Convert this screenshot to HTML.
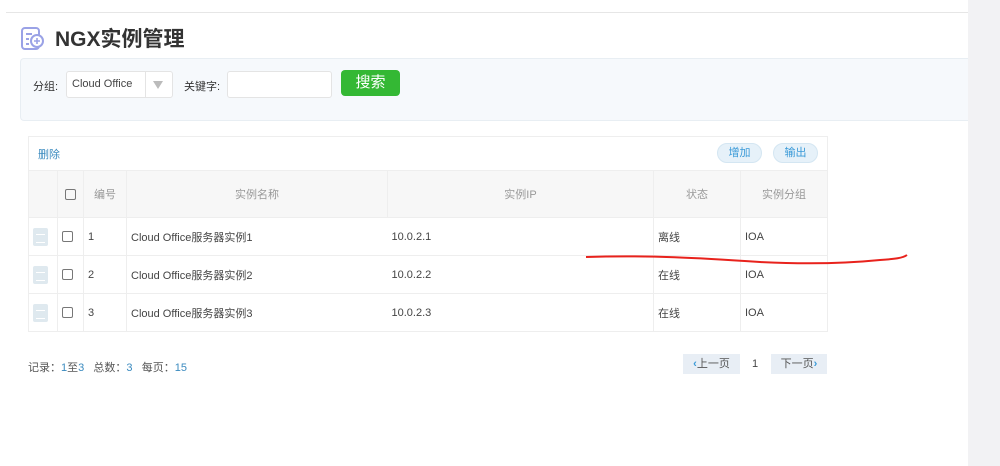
<!DOCTYPE html>
<html><head><meta charset="utf-8"><style>
*{margin:0;padding:0;box-sizing:border-box}
body{width:1000px;height:466px;background:#fff;font-family:"Liberation Sans","Noto Sans CJK SC",sans-serif;position:relative;overflow:hidden;font-size:11px;color:#555}
.a{position:absolute}
.rs{position:absolute;left:968px;top:0;width:32px;height:466px;background:#f2f2f4}
table{border-collapse:collapse;position:absolute;left:28px;top:170px}
td{border:1px solid #eee;height:38px;font-size:11px;color:#444;padding-left:4px;vertical-align:middle}
th{border:1px solid #eee;height:47px;background:#f7f7f7;font-weight:normal;color:#999;font-size:11px}
.cb{display:inline-block;width:11px;height:11px;border:1px solid #777;border-radius:2px;vertical-align:middle}
.doc{display:inline-block;width:15px;height:18px;background:#dfe9ef;border-radius:2px;position:relative;vertical-align:middle}
.doc:after{content:"";position:absolute;left:3px;top:6px;width:9px;height:7px;border-top:1px solid #fff;border-bottom:1px solid #fff}
.pb{position:absolute;top:354px;height:20px;background:#e8eef5;font-size:11px;color:#555;line-height:20px;text-align:center}
.nr{border-right:none}.nl{border-left:none}
</style></head><body>
<div class="a" style="left:6px;top:12px;width:962px;height:1px;background:#e6e6e6"></div>
<div class="a" style="left:20px;top:58px;width:948px;height:63px;background:#f6f9fc;border:1px solid #e8eef3;border-right:none;border-radius:4px 0 0 4px"></div>
<div class="rs"></div>
<svg class="a" style="left:20px;top:26px" width="26" height="26" viewBox="0 0 26 26"><rect x="2" y="2" width="17" height="21" rx="3" fill="none" stroke="#9aa2e6" stroke-width="2"/><line x1="6" y1="8" x2="12" y2="8" stroke="#9aa2e6" stroke-width="2"/><line x1="6" y1="13" x2="9" y2="13" stroke="#9aa2e6" stroke-width="2"/><line x1="6" y1="18" x2="9" y2="18" stroke="#9aa2e6" stroke-width="2"/><circle cx="17" cy="15" r="6" fill="#fff" stroke="#9aa2e6" stroke-width="2"/><path d="M17 12v6M14 15h6" stroke="#9aa2e6" stroke-width="1.6"/></svg>
<div class="a" style="left:55px;top:25px;font-size:21px;font-weight:bold;color:#333;line-height:30px">NGX实例管理</div>
<div class="a" style="left:33px;top:78px;font-size:11px;color:#333">分组:</div>
<div class="a" style="left:66px;top:71px;width:107px;height:27px;background:#fff;border:1px solid #e4e4e4;border-radius:3px"><span style="position:absolute;left:5px;top:6px;color:#444">Cloud Office</span><span style="position:absolute;left:78px;top:0;width:1px;height:25px;background:#e4e4e4"></span><span style="position:absolute;left:86px;top:9px;border-left:5px solid transparent;border-right:5px solid transparent;border-top:8px solid #bbb"></span></div>
<div class="a" style="left:184px;top:78px;font-size:11px;color:#333">关键字:</div>
<div class="a" style="left:227px;top:71px;width:105px;height:27px;background:#fff;border:1px solid #e4e4e4;border-radius:3px"></div>
<div class="a" style="left:341px;top:70px;width:59px;height:26px;background:#34b834;border-radius:4px;color:#fff;font-size:15px;text-align:center;line-height:26px">搜索</div>
<div class="a" style="left:28px;top:136px;width:800px;height:35px;border:1px solid #eee;border-bottom:none"></div>
<div class="a" style="left:38px;top:146px;color:#3a8abf;font-size:11px">删除</div>
<div class="a" style="left:717px;top:143px;width:45px;height:20px;background:#e6f1f9;border:1px solid #d4e6f2;border-radius:10px;color:#3a9ad8;text-align:center;line-height:18px">增加</div>
<div class="a" style="left:773px;top:143px;width:45px;height:20px;background:#e6f1f9;border:1px solid #d4e6f2;border-radius:10px;color:#3a9ad8;text-align:center;line-height:18px">输出</div>
<table>
<tr><th style="width:29px"></th><th style="width:26px"><span class="cb"></span></th><th style="width:43px">编号</th><th style="width:261px">实例名称</th><th style="width:266px">实例IP</th><th style="width:87px">状态</th><th style="width:87px">实例分组</th></tr>
<tr><td><span class="doc"></span></td><td><span class="cb"></span></td><td>1</td><td class="nr">Cloud Office服务器实例1</td><td class="nl">10.0.2.1</td><td>离线</td><td>IOA</td></tr>
<tr><td><span class="doc"></span></td><td><span class="cb"></span></td><td>2</td><td class="nr">Cloud Office服务器实例2</td><td class="nl">10.0.2.2</td><td>在线</td><td>IOA</td></tr>
<tr><td><span class="doc"></span></td><td><span class="cb"></span></td><td>3</td><td class="nr">Cloud Office服务器实例3</td><td class="nl">10.0.2.3</td><td>在线</td><td>IOA</td></tr>
</table>
<svg class="a" style="left:0;top:0" width="1000" height="466"><path d="M586 257 C650 255 700 258 760 262 C820 265 860 262 880 260 C895 259 903 258 907 255" fill="none" stroke="#e8221c" stroke-width="2"/></svg>
<div class="a" style="left:28px;top:359px;font-size:11px;color:#555">记录：<span style="color:#3a8abf">1</span>至<span style="color:#3a8abf">3</span>&nbsp;&nbsp;&nbsp;总数：<span style="color:#3a8abf">3</span>&nbsp;&nbsp;&nbsp;每页：<span style="color:#3a8abf">15</span></div>
<div class="pb" style="left:683px;width:57px"><span style="color:#3a9ad8;font-weight:bold">&lsaquo;</span>上一页</div>
<div class="a" style="left:752px;top:358px;font-size:11px;color:#444">1</div>
<div class="pb" style="left:771px;width:56px">下一页<span style="color:#3a9ad8;font-weight:bold">&rsaquo;</span></div>
</body></html>
